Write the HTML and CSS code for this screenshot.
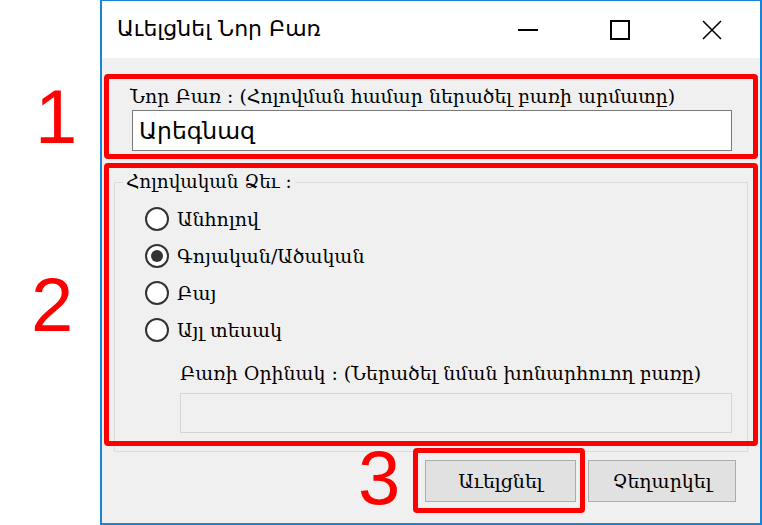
FILE: index.html
```html
<!DOCTYPE html>
<html lang="hy">
<head>
  <meta charset="UTF-8">
  <title>Աւելցնել Նոր Բառ</title>
  <link rel="stylesheet" href="styles.css">
</head>
<body>
  <div class="stage">
    <div class="window">
      <div class="titlebar">
        <span class="title">Աւելցնել Նոր Բառ</span>
        <div class="controls">
          <span class="ctl ctl-min"></span>
          <span class="ctl ctl-max"></span>
          <span class="ctl ctl-close">
            <svg width="20" height="20" viewBox="0 0 20 20"><path d="M1 1 L19 19 M19 1 L1 19" stroke="#000" stroke-width="1.6" fill="none"/></svg>
          </span>
        </div>
      </div>

      <div class="client">
        <div class="word-row">
          <label class="lbl" for="word">Նոր Բառ : (Հոլովման համար ներածել բառի արմատը)</label>
          <input class="field" id="word" type="text" value="Արեգնազ">
        </div>

        <fieldset class="group">
          <legend>Հոլովական Ձեւ :</legend>
          <label class="radio"><span class="dot"></span>Անհոլով</label>
          <label class="radio checked"><span class="dot"></span>Գոյական/Ածական</label>
          <label class="radio"><span class="dot"></span>Բայ</label>
          <label class="radio"><span class="dot"></span>Այլ տեսակ</label>

          <div class="sample">
            <div class="lbl">Բառի Օրինակ : (Ներածել նման խոնարհուող բառը)</div>
            <div class="field field-off"></div>
          </div>
        </fieldset>

        <div class="buttons">
          <button type="button" class="btn btn-add">Աւելցնել</button>
          <button type="button" class="btn">Չեղարկել</button>
        </div>
      </div>
    </div>

    <!-- ցուցիչներ -->
    <div class="mark mark-1"></div>
    <div class="mark mark-2"></div>
    <div class="mark mark-3"></div>
    <span class="num num-1">1</span>
    <span class="num num-2">2</span>
    <span class="num num-3">3</span>
  </div>
</body>
</html>
```

FILE: styles.css
```css
body {
    margin: 0;
    background: #ffffff;
    font-family: "DejaVu Serif", serif;
}
.stage {
    position: relative;
    width: 762px;
    height: 525px;
    overflow: hidden;
}
.window {
    margin-left: 100px;
    width: 658px;
    height: 522px;
    border: 1px solid #1883d7;
    border-width: 1px 2px 2px 2px;
    background: #f0f0f0;
    display: flex;
    flex-direction: column;
}
.titlebar {
    height: 57px;
    flex-shrink: 0;
    background: #ffffff;
    display: flex;
    align-items: center;
    justify-content: space-between;
    padding-left: 15px;
}
.title {
    font-family: "DejaVu Sans", sans-serif;
    font-size: 22px;
    color: #000;
    padding-bottom: 2px;
}
.controls {
    display: flex;
    height: 100%;
    padding-right: 2px;
}
.ctl {
    width: 92px;
    display: flex;
    align-items: center;
    justify-content: center;
}
.ctl-min::before {
    content: "";
    width: 20px;
    height: 2px;
    background: #000;
}
.ctl-max::before {
    content: "";
    width: 16px;
    height: 16px;
    border: 2px solid #000;
}
.client {
    flex: 1;
    padding: 27px 12px 0 12px;
    display: flex;
    flex-direction: column;
}
.lbl {
    font-size: 18.9px;
    line-height: 22px;
    color: #000;
    display: block;
}
.word-row {
    padding-left: 16px;
    display: flex;
    flex-direction: column;
}
.field {
    box-sizing: border-box;
    width: 600px;
    height: 41px;
    border: 1px solid #7a7a7a;
    background: #fff;
    margin-top: 3px;
    margin-left: 2px;
    padding: 0 6px;
    font-family: "DejaVu Sans", sans-serif;
    font-size: 23.5px;
    color: #000;
    outline: none;
}
.group {
    margin: 20px 0 0 0;
    width: 634px;
    box-sizing: border-box;
    border: 1px solid #dcdcdc;
    padding: 7px 0 18px 30px;
    display: flex;
    flex-direction: column;
}
.group legend {
    font-size: 18.4px;
    line-height: 22px;
    padding: 0 3px;
    margin-left: -22px;
}
.radio {
    display: flex;
    align-items: center;
    gap: 8px;
    height: 37px;
    font-size: 19px;
}
.dot {
    box-sizing: border-box;
    width: 24px;
    height: 24px;
    border: 2px solid #333;
    border-radius: 50%;
    background: #fff;
    display: flex;
    align-items: center;
    justify-content: center;
}
.checked .dot::after {
    content: "";
    width: 12px;
    height: 12px;
    border-radius: 50%;
    background: #333;
}
.sample {
    padding-left: 35px;
    margin-top: 14px;
}
.field-off {
    width: 552px;
    height: 40px;
    background: #f0f0f0;
    border-color: #d4d4d4;
    margin-top: 9px;
    margin-left: 0;
}
.buttons {
    display: flex;
    justify-content: flex-end;
    gap: 12px;
    padding-right: 12px;
    margin-top: 8px;
}
.btn {
    width: 148px;
    height: 42px;
    background: #e1e1e1;
    border: 1px solid #adadad;
    font-family: "DejaVu Serif", serif;
    font-size: 19px;
    color: #000;
}
.btn-add {
    width: 151px;
}
.mark {
    position: absolute;
    border: 5px solid #ff0000;
    border-radius: 4px;
    box-sizing: border-box;
}
.mark-1 { left: 104px; top: 74px; width: 654px; height: 85px; }
.mark-2 { left: 104px; top: 163px; width: 654px; height: 283px; }
.mark-3 { left: 413px; top: 448px; width: 172px; height: 65px; }
.num {
    position: absolute;
    font-family: "Liberation Sans", sans-serif;
    font-size: 76px;
    line-height: 1;
    color: #ff0000;
}
.num-1 { left: 35px; top: 79px; }
.num-2 { left: 31px; top: 267px; }
.num-3 { left: 358px; top: 440px; }
```
